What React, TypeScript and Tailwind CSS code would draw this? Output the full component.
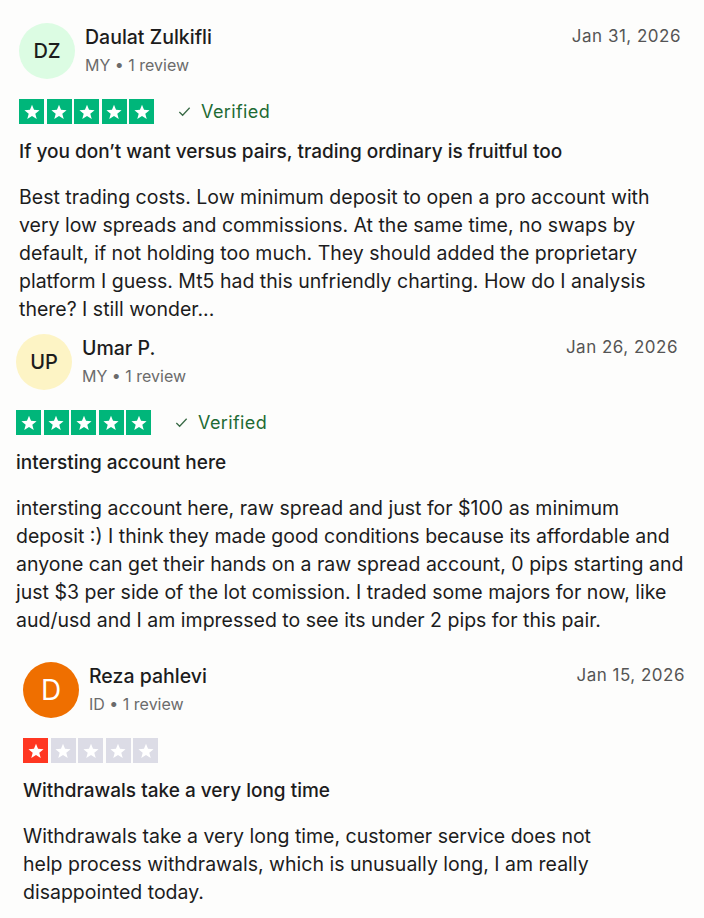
import React from "react";

type Review = {
  initials: string;
  avatarClass: string;
  initialsClass: string;
  name: string;
  meta: string;
  date: string;
  rating: number;
  title: string;
  body: string;
  wrapClass: string;
  bodyWidth: string;
};

const Star = () => (
  <svg viewBox="0 0 24 24" className="w-[18px] h-[18px]" fill="#ffffff">
    <path d="M12 2.2l2.7 6.9 7.4.4-5.7 4.7 1.9 7.2L12 17.4l-6.3 4 1.9-7.2-5.7-4.7 7.4-.4z" />
  </svg>
);

const Stars = ({ rating }: { rating: number }) => {
  const items = [0, 1, 2, 3, 4];
  return (
    <div className="flex gap-[2.5px]">
      {items.map((i) => {
        let bg = "bg-[#dcdce6]";
        if (i < rating) bg = rating === 1 ? "bg-[#ff3722]" : "bg-[#00b67a]";
        return (
          <div key={i} className={`w-[25px] h-[25px] flex items-center justify-center ${bg}`}>
            <Star />
          </div>
        );
      })}
    </div>
  );
};

const Check = () => (
  <svg viewBox="0 0 16 16" className="w-[15px] h-[15px]" fill="none" stroke="#3a6b47" strokeWidth="1.4">
    <path d="M2.5 8.5l3.5 3.5 7.5-8" />
  </svg>
);

const ReviewCard = ({ r }: { r: Review }) => (
  <div className={r.wrapClass}>
    <div className="flex items-start">
      <div className={`w-[56px] h-[56px] rounded-full flex items-center justify-center shrink-0 ${r.avatarClass}`}>
        <span className={r.initialsClass}>{r.initials}</span>
      </div>
      <div className="ml-[10px] pt-[2px] flex-1">
        <div className="text-[19.5px] leading-[24px] font-medium text-[#1c1c1c]">{r.name}</div>
        <div className="mt-[4px] text-[16px] leading-[24px] text-[#6b6b6b]">{r.meta}</div>
      </div>
      <div className="pt-[1px] text-[17px] leading-[24px] text-[#555555] tracking-[0.5px]">{r.date}</div>
    </div>
    <div className="mt-[20px] flex items-center">
      <Stars rating={r.rating} />
      {r.rating === 5 && (
        <div className="ml-[23px] flex items-center gap-[9px] text-[18px] leading-[24px] tracking-[0.4px] text-[#1e6b34]">
          <Check />
          <span>Verified</span>
        </div>
      )}
    </div>
    <div className="mt-[16px] text-[19px] leading-[24px] font-medium text-[#1c1c1c]">{r.title}</div>
    <p className={`mt-[19px] text-[19.5px] leading-[28px] text-[#1c1c1c] ${r.bodyWidth}`}>{r.body}</p>
  </div>
);

const reviews: Review[] = [
  {
    initials: "DZ",
    avatarClass: "bg-[#dcfce3]",
    initialsClass: "text-[20px] font-medium text-[#1c1c1c]",
    name: "Daulat Zulkifli",
    meta: "MY • 1 review",
    date: "Jan 31, 2026",
    rating: 5,
    title: "If you don’t want versus pairs, trading ordinary is fruitful too",
    body:
      "Best trading costs. Low minimum deposit to open a pro account with very low spreads and commissions. At the same time, no swaps by default, if not holding too much. They should added the proprietary platform I guess. Mt5 had this unfriendly charting. How do I analysis there? I still wonder...",
    wrapClass: "ml-[19px] w-[662px] pt-[23px]",
    bodyWidth: "w-[662px]",
  },
  {
    initials: "UP",
    avatarClass: "bg-[#fdf4c5]",
    initialsClass: "text-[20px] font-medium text-[#1c1c1c]",
    name: "Umar P.",
    meta: "MY • 1 review",
    date: "Jan 26, 2026",
    rating: 5,
    title: "intersting account here",
    body:
      "intersting account here, raw spread and just for $100 as minimum deposit :) I think they made good conditions because its affordable and anyone can get their hands on a raw spread account, 0 pips starting and just $3 per side of the lot comission. I traded some majors for now, like aud/usd and I am impressed to see its under 2 pips for this pair.",
    wrapClass: "ml-[16px] w-[662px] mt-[11px]",
    bodyWidth: "w-[670px]",
  },
  {
    initials: "D",
    avatarClass: "bg-[#ef6f00]",
    initialsClass: "text-[28px] font-normal text-white",
    name: "Reza pahlevi",
    meta: "ID • 1 review",
    date: "Jan 15, 2026",
    rating: 1,
    title: "Withdrawals take a very long time",
    body:
      "Withdrawals take a very long time, customer service does not help process withdrawals, which is unusually long, I am really disappointed today.",
    wrapClass: "ml-[23px] w-[662px] mt-[28px]",
    bodyWidth: "w-[600px]",
  },
];

export default function App() {
  return (
    <div
      className="w-[704px] h-[918px] bg-[#fdfdfc] overflow-hidden"
      style={{ fontFamily: "Inter, 'Noto Sans', sans-serif" }}
    >
      {reviews.map((r) => (
        <ReviewCard key={r.name} r={r} />
      ))}
    </div>
  );
}
